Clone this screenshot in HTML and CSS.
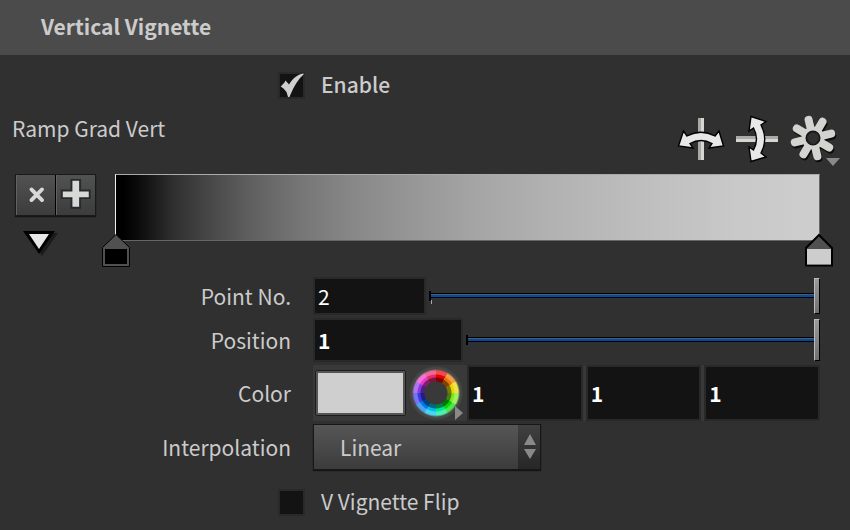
FILE: index.html
```html
<!DOCTYPE html>
<html lang="en">
<head>
<meta charset="utf-8">
<title>Vertical Vignette</title>
<link rel="stylesheet" href="styles.css">
</head>
<body>
<header class="panel-head"><h1>Vertical Vignette</h1></header>
<main class="panel">
  <div class="toggle toggle-top">
    <input type="checkbox" id="enable" checked>
    <svg class="tick" viewBox="0 0 27 27" aria-hidden="true"><path d="M2.700 14.500L6.500 10.500L7.500 8.500L11 12.500C14.500 7 19 2.500 25.500 1.500V2.500C20 7.500 16 14 12.500 22.500L11.500 25H10L8.500 20L5.500 16.500Z" fill="#cfcfcf"/></svg>
    <label for="enable" class="strong">Enable</label>
  </div>

  <section class="ramp">
    <div class="ramp-head">
      <h2>Ramp Grad Vert</h2>
      <div class="tools">
        <button type="button" aria-label="Flip horizontally">
          <svg viewBox="0 0 48 48"><path d="M21 3h3v42h-3z" fill="#a8aaa6"/><path d="M24 3h3v42h-3z" fill="#d6d7d3"/><path id="arc" d="M1.500 31L6.500 16L10 21Q24 13.500 38 21L42 16L46.500 31L32 33L35 28.500Q24 22.500 13 28.500L16 33Z" fill="#e8e8e8" stroke="#000" stroke-width="1.400"/></svg>
        </button>
        <button type="button" aria-label="Flip vertically">
          <svg viewBox="0 0 48 48"><path d="M3 21h42v3H3z" fill="#a8aaa6"/><path d="M3 24h42v3H3z" fill="#d6d7d3"/><use href="#arc" transform="matrix(0 1 -1 0 49 0)"/></svg>
        </button>
        <button type="button" aria-label="Ramp options">
          <svg viewBox="0 0 48 48">
            <defs>
              <mask id="hub" maskUnits="userSpaceOnUse" x="0" y="0" width="48" height="48"><rect width="48" height="48" fill="#fff"/><circle cx="24" cy="23" r="6" fill="#000"/></mask>
              <g id="cog"><circle cx="24" cy="23" r="11"/><path d="M24 23L19.600 4.800M24 23L33.500 6.800M24 23L42.200 18.600M24 23L40.200 32.500M24 23L28.400 41.200M24 23L14.500 39.200M24 23L5.800 27.400M24 23L7.800 13.500" fill="none" stroke-width="8" stroke-linecap="round"/></g>
            </defs>
            <g mask="url(#hub)">
              <use href="#cog" x="1" y="2" fill="#0c0c0c" stroke="#0c0c0c"/>
              <use href="#cog" fill="#d3d4d0" stroke="#d3d4d0"/>
            </g>
            <circle cx="24" cy="23" r="6.500" fill="none" stroke="#161616" stroke-width="2"/>
          </svg>
          <i class="more more-down"></i>
        </button>
      </div>
    </div>
    <div class="ramp-body">
      <div class="ramp-side">
        <div class="pair">
          <button type="button" aria-label="Delete point"><svg viewBox="0 0 40 40"><path d="M15 14L26 25M26 14L15 25" stroke="#d8d8d6" stroke-width="4" stroke-linecap="round"/></svg></button>
          <button type="button" aria-label="Add point"><svg viewBox="0 0 40 40"><path d="M15 4h9v11h10v8H24v10h-9V23H5v-8h10z" fill="#d8d8d6" stroke="#252a2c" stroke-width="2"/></svg></button>
        </div>
        <button type="button" class="fold" aria-label="Collapse ramp"><svg viewBox="0 0 36 26"><path d="M5 3H36L20 26Z" fill="#1b1b1b"/><path d="M1 1H33L17 24Z" fill="#000"/><path d="M7 4H27L17 19Z" fill="#e8e8e8"/></svg></button>
      </div>
      <div class="ramp-bar">
        <svg class="stop stop-first" viewBox="0 0 30 35"><path d="M15 1.500L28.500 14.500V33.500H1.500V14.500Z" fill="#505050" stroke="#000"/><path d="M4 16h22v15H4z" fill="#000"/></svg>
        <svg class="stop stop-last" viewBox="0 0 30 35"><path d="M15 2L28 15V32.500H2V15Z" fill="#505050" stroke="#000" stroke-width="2"/><path d="M3 16h24v15.500H3z" fill="#cdcdcd"/></svg>
      </div>
    </div>
  </section>

  <div class="fields">
    <label for="point">Point No.</label>
    <div class="row row-point">
      <input type="text" id="point" value="2">
      <input type="range" min="1" max="2" value="2" aria-label="Point number slider">
    </div>
    <label for="pos">Position</label>
    <div class="row row-pos">
      <input type="text" id="pos" class="strong" value="1">
      <input type="range" min="0" max="1" step="0.01" value="1" aria-label="Position slider">
    </div>
    <label for="red">Color</label>
    <div class="row row-color">
      <button type="button" class="swatch" aria-label="Color swatch"></button>
      <button type="button" class="wheel" aria-label="Color picker"><i class="more more-right"></i></button>
      <input type="text" id="red" class="strong" value="1" aria-label="Color red">
      <input type="text" class="strong" value="1" aria-label="Color green">
      <input type="text" class="strong" value="1" aria-label="Color blue">
    </div>
    <label for="interp">Interpolation</label>
    <div class="row row-interp">
      <select id="interp"><option>Linear</option></select>
      <svg class="spin" viewBox="0 0 22 44" aria-hidden="true"><path d="M12 9L18 20H6ZM12 34L18 24H6Z" fill="#898989"/></svg>
    </div>
  </div>

  <div class="toggle toggle-flip">
    <input type="checkbox" id="flip">
    <label for="flip">V Vignette Flip</label>
  </div>
</main>
</body>
</html>
```

FILE: styles.css
```css
* { box-sizing: border-box; }
body {
  margin: 0;
  background: #303030;
  color: #cbcbcb;
  font: 21px/32px "Noto Sans CJK SC", sans-serif;
}
h1, h2 { margin: 0; font-size: 21px; }
h2 { font-weight: 400; }
button, input, select { font: inherit; margin: 0; padding: 0; border: 0; border-radius: 0; }
button { position: relative; background: none; }
svg { display: block; }
.strong { font-weight: 500; }

.panel-head { background: #4b4b4b; padding: 10px 41px 13px; }
.panel { padding: 0 30px 8px 12px; }

.toggle { position: relative; display: flex; align-items: center; gap: 16px; padding-left: 266px; }
.toggle label { padding-bottom: 3px; }
.toggle-top { padding-top: 13px; }
.toggle-flip { padding-top: 15px; }
.toggle input { appearance: none; width: 27px; height: 27px; background: #131313; border: 2px solid #292929; }
.tick { position: absolute; left: 266px; bottom: 4px; width: 27px; height: 27px; pointer-events: none; }

.ramp-head { display: flex; justify-content: space-between; height: 58px; padding-top: 9px; }
.tools { display: flex; gap: 8px; margin: 3px -17px 0 0; }
.tools button, .tools svg { width: 48px; height: 48px; }
.more { position: absolute; }
.more-down { right: -3px; bottom: -3px; border: 7px solid transparent; border-top: 8px solid #898989; border-bottom: 0; }
.more-right { right: 0; bottom: 0; border: 7px solid transparent; border-left: 8px solid #898989; border-right: 0; }

.ramp-body { display: flex; gap: 19px; margin-top: 13px; }
.ramp-side { padding-left: 3px; }
.pair { display: flex; width: 81px; border: 1px solid #1a1a1a; box-shadow: 0 1px 1px #151515; }
.pair button { flex: 1; height: 40px; background: linear-gradient(#525252, #3c3c3c); border-left: 1px solid #626262; }
.pair button + button { box-shadow: -1px 0 #000; }
.fold { display: block; width: 36px; height: 26px; margin: 14px 0 0 7px; }
.ramp-bar {
  position: relative;
  flex: 1;
  height: 67px;
  border: 1px solid #666;
  border-top-color: #aaa;
  border-left-color: #eee;
  background: linear-gradient(90deg, #000 1%, #0a0a0a 3%, #2e2e2e 8%, #464646 13%, #5f5f5f 19%, #757575 26%, #868686 33%, #939393 40%, #a6a6a6 52%, #b3b3b3 63%, #c0c0c0 77%, #c8c8c8 88%, #cecece);
}
.stop { position: absolute; top: 58px; width: 30px; height: 35px; }
.stop-first { left: -15px; }
.stop-last { right: -15px; }

.fields { display: grid; grid-template-columns: 279px 1fr; column-gap: 22px; row-gap: 3px; align-items: center; margin-top: 21px; }
.fields label { text-align: right; padding-bottom: 1px; }
.row { display: flex; position: relative; }
.row-point { height: 38px; }
.row-pos { height: 44px; }
.row-color { height: 56px; gap: 3px; background: #393939; align-items: center; }
.row-interp { height: 46px; width: 228px; }
input[type="text"] { height: 100%; width: 113px; padding: 0 3px 1px; color: #fff; background: #131313; border: 2px solid #292929; }
.fields input.strong { font-weight: 700; }
.row-pos input[type="text"] { width: 150px; }
.row-color input[type="text"] { flex: 1; width: 0; }

input[type="range"] { appearance: none; flex: 1; min-width: 0; height: 100%; margin-left: 3px; background: linear-gradient(#000, #000) 0 50% / 2px 10px no-repeat; }
.row-point input[type="range"] { background: linear-gradient(#000, #000) 0 50% / 2px 10px no-repeat, linear-gradient(#aaa, #aaa) 2px 23px / 1px 4px no-repeat; }
input[type="range"]::-webkit-slider-runnable-track {
  height: 100%;
  background: linear-gradient(#000 1px, #466078 1px 2px, #08489a 2px 4px, #000 4px 5px, transparent 5px) 2px 50% / 100% 6px no-repeat;
}
input[type="range"]::-webkit-slider-thumb {
  appearance: none;
  width: 6px;
  height: calc(100% - 2px);
  margin-top: 1px;
  background: linear-gradient(#999, #707070);
  border: 1px solid #000;
  border-top-color: #bbb;
  border-left-color: #bbb;
}

.swatch { width: 91px; height: 46px; margin-left: 2px; background: #cfcfcf; border: 3px solid #555; border-radius: 2px; outline: 1px solid #1d1d1d; outline-offset: -1px; }
.wheel {
  width: 54px;
  height: 54px;
  margin-right: 1px;
  border-radius: 50%;
  background:
    radial-gradient(circle, #393939 11px, rgba(0,0,0,.45) 12px 15px, transparent 16px 18px, rgba(255,255,255,.3) 19px 22px, #464946 24px 25px, #3c3d3c 27px),
    conic-gradient(#e80000 30deg, #e87800 30deg 60deg, #e8d800 60deg 90deg, #7de820 90deg 120deg, #00d800 120deg 150deg, #00e890 150deg 180deg, #00c0e8 180deg 210deg, #0078e8 210deg 240deg, #3838e8 240deg 270deg, #8c38e8 270deg 300deg, #e838c8 300deg 330deg, #e82868 330deg);
}

select { appearance: none; width: 100%; padding: 0 0 0 26px; color: #cbcbcb; background: linear-gradient(#565656, #3c3c3c); border: 1px solid #171717; box-shadow: 0 1px 1px #151515; }
.spin { position: absolute; top: 1px; right: 1px; width: 22px; height: 44px; background: linear-gradient(#404040, #272727); pointer-events: none; }
```
